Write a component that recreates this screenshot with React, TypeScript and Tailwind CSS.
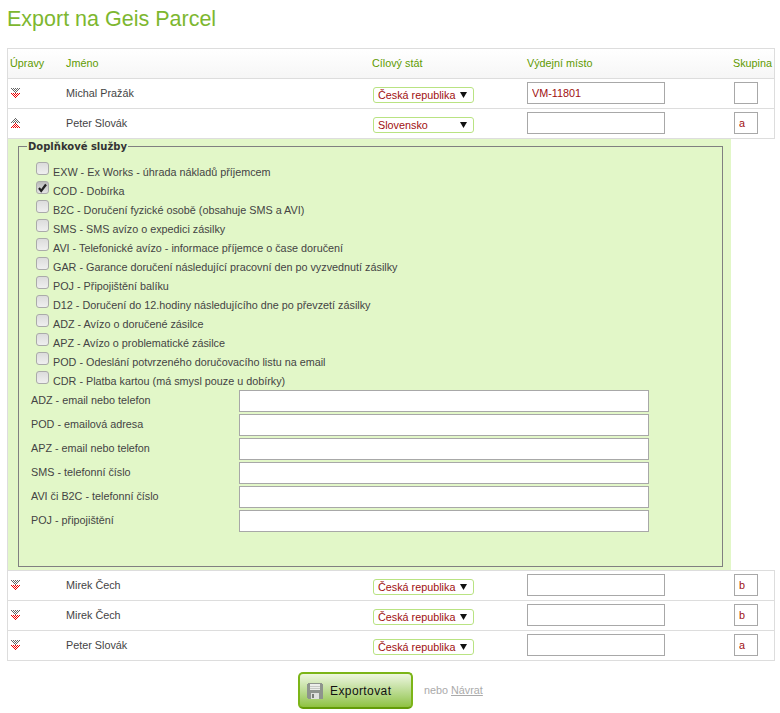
import React from "react";

const services = [
  "EXW - Ex Works - úhrada nákladů příjemcem",
  "COD - Dobírka",
  "B2C - Doručení fyzické osobě (obsahuje SMS a AVI)",
  "SMS - SMS avízo o expedici zásilky",
  "AVI - Telefonické avízo - informace příjemce o čase doručení",
  "GAR - Garance doručení následující pracovní den po vyzvednutí zásilky",
  "POJ - Připojištění balíku",
  "D12 - Doručení do 12.hodiny následujícího dne po převzetí zásilky",
  "ADZ - Avízo o doručené zásilce",
  "APZ - Avízo o problematické zásilce",
  "POD - Odeslání potvrzeného doručovacího listu na email",
  "CDR - Platba kartou (má smysl pouze u dobírky)",
];

const fields = [
  "ADZ - email nebo telefon",
  "POD - emailová adresa",
  "APZ - email nebo telefon",
  "SMS - telefonní číslo",
  "AVI či B2C - telefonní číslo",
  "POJ - připojištění",
];

function Arrows({ up }: { up: boolean }) {
  const cells: React.ReactNode[] = [];
  const draw = (startY: number, color: string) => {
    for (let r = 0; r < 5; r++) {
      const y = up ? startY + 4 - r : startY + r;
      for (let x = r; x <= 9 - r; x++) {
        if ((x + r) % 2 === 0) {
          cells.push(<rect key={`${startY}-${r}-${x}`} x={x} y={y} width={1} height={1} fill={color} />);
        }
      }
    }
  };
  draw(0, "#666666");
  draw(5, "#f00000");
  return (
    <svg width="10" height="10" viewBox="0 0 10 10" shapeRendering="crispEdges">
      {cells}
    </svg>
  );
}

function Floppy() {
  return (
    <svg width="16" height="16" viewBox="0 0 16 16" shapeRendering="crispEdges">
      <path d="M0 1h1V0h13l2 2v13l-1 1H1l-1-1z" fill="#8e948d" />
      <rect x="3" y="1" width="10" height="6" fill="#eceeea" />
      <rect x="3" y="3" width="10" height="1" fill="#c6c9c4" />
      <rect x="3" y="5" width="10" height="1" fill="#c6c9c4" />
      <rect x="4" y="10" width="8" height="6" fill="#dfe1dd" />
      <rect x="5" y="11" width="2" height="4" fill="#7a7e78" />
    </svg>
  );
}

function Row({ name, state, place = "", group = "", up = false }: { name: string; state: string; place?: string; group?: string; up?: boolean }) {
  return (
    <div className="flex h-[30px] border-b border-[#dddddd] bg-white">
      <div className="w-[58px] pl-[3px] pt-[9px]">
        <Arrows up={up} />
      </div>
      <div className="w-[306px] pt-[6px]">{name}</div>
      <div className="w-[155px] pt-[8px]">
        <div className="relative ml-px h-[16px] w-[101px]">
          <select
            defaultValue={state}
            className="h-[16px] w-[101px] appearance-none rounded-[3px] border border-[#b9e382] bg-white pl-[4px] text-[10.8px] leading-[14px] text-[#a01010] outline-none"
          >
            <option>Česká republika</option>
            <option>Slovensko</option>
          </select>
          <svg width="7" height="6" viewBox="0 0 7 6" className="absolute right-[7px] top-[5px]">
            <path d="M0 0h7L3.5 6z" fill="#111111" />
          </svg>
        </div>
      </div>
      <div className="w-[207px] pt-[3px]">
        <input
          defaultValue={place}
          className="h-[22px] w-[138px] border border-[#a8a8a8] bg-white px-[4px] text-[10.8px] text-[#a01010] outline-none"
        />
      </div>
      <div className="pt-[3px]">
        <input
          defaultValue={group}
          className="h-[22px] w-[24px] border border-[#a8a8a8] bg-white px-[4px] text-[10.8px] text-[#a01010] outline-none"
        />
      </div>
    </div>
  );
}

function Check({ label, checked }: { label: string; checked?: boolean }) {
  return (
    <div className="flex h-[19px] items-center">
      <span
        className={`relative -top-[3px] mr-[4px] flex h-[13px] w-[13px] items-center justify-center rounded-[3px] border border-[#aaaaaa] bg-gradient-to-b ${
          checked ? "from-[#bcbcbc] to-[#e4e4e4]" : "from-[#dcdcdc] to-[#efefef]"
        }`}
      >
        {checked && (
          <svg width="11" height="10" viewBox="0 0 11 10">
            <path d="M2 5 4.2 8 9 1.5" fill="none" stroke="#222222" strokeWidth="2.2" />
          </svg>
        )}
      </span>
      <span className="relative top-[1px]">{label}</span>
    </div>
  );
}

export default function App() {
  return (
    <div className="h-[713px] w-[780px] overflow-hidden bg-white px-[7px] font-['Liberation_Sans',sans-serif] text-[10.8px] text-[#444444]">
      <h1 className="h-[48px] pt-[7px] text-[21.5px] font-normal leading-[24px] text-[#7db72f]">Export na Geis Parcel</h1>

      <div className="w-[768px] border-l border-[#dddddd]">
        <div className="border-r border-[#dddddd]">
          <div className="flex h-[31px] items-center border-y border-[#dddddd] bg-gradient-to-b from-white to-[#f6f6f6] text-[#5f9a00]">
            <div className="w-[58px] pl-[2px]">Úpravy</div>
            <div className="w-[306px]">Jméno</div>
            <div className="w-[155px]">Cílový stát</div>
            <div className="w-[206px]">Výdejní místo</div>
            <div>Skupina</div>
          </div>
          <Row name="Michal Pražák" state="Česká republika" place="VM-11801" />
          <Row name="Peter Slovák" state="Slovensko" group="a" up />
        </div>

        <div className="h-[431px] w-[723px] bg-[#e2f7c8] pl-[10px] pt-[1px]">
          <fieldset className="h-[427px] w-[705px] border border-[#808080] pl-[17px]">
            <legend className="-ml-[9px] px-[1px] font-['DejaVu_Sans',sans-serif] text-[10px] font-bold leading-[13px] text-[#333333]">
              Doplňkové služby
            </legend>
            <div className="mt-[9px] flex flex-col">
              {services.map((s, i) => (
                <Check key={s} label={s} checked={i === 1} />
              ))}
            </div>
            <div className="-ml-[5px] flex flex-col">
              {fields.map((f) => (
                <div key={f} className="flex h-[24px]">
                  <div className="w-[208px] pt-[2px]">{f}</div>
                  <input className="h-[22px] w-[410px] border border-[#a8a8a8] bg-white outline-none" />
                </div>
              ))}
            </div>
          </fieldset>
        </div>

        <div className="border-r border-[#dddddd]">
          <div className="border-t border-[#dddddd]">
            <Row name="Mirek Čech" state="Česká republika" group="b" />
            <Row name="Mirek Čech" state="Česká republika" group="b" />
            <Row name="Peter Slovák" state="Česká republika" group="a" />
          </div>
        </div>
      </div>

      <div className="mt-[11px] flex items-center pl-[291px]">
        <button className="flex h-[37px] w-[115px] items-center rounded-[5px] border-2 border-[#7cb518] border-b-[#639c08] bg-gradient-to-b from-[#eef6e0] to-[#8fc23f] pl-[7px] font-['Liberation_Sans',sans-serif] text-[12px] tracking-[0.4px] text-[#111111]">
          <Floppy />
          <span className="ml-[7px]">Exportovat</span>
        </button>
        <span className="ml-[11px] text-[#aaaaaa]">
          nebo <a className="underline">Návrat</a>
        </span>
      </div>
    </div>
  );
}
